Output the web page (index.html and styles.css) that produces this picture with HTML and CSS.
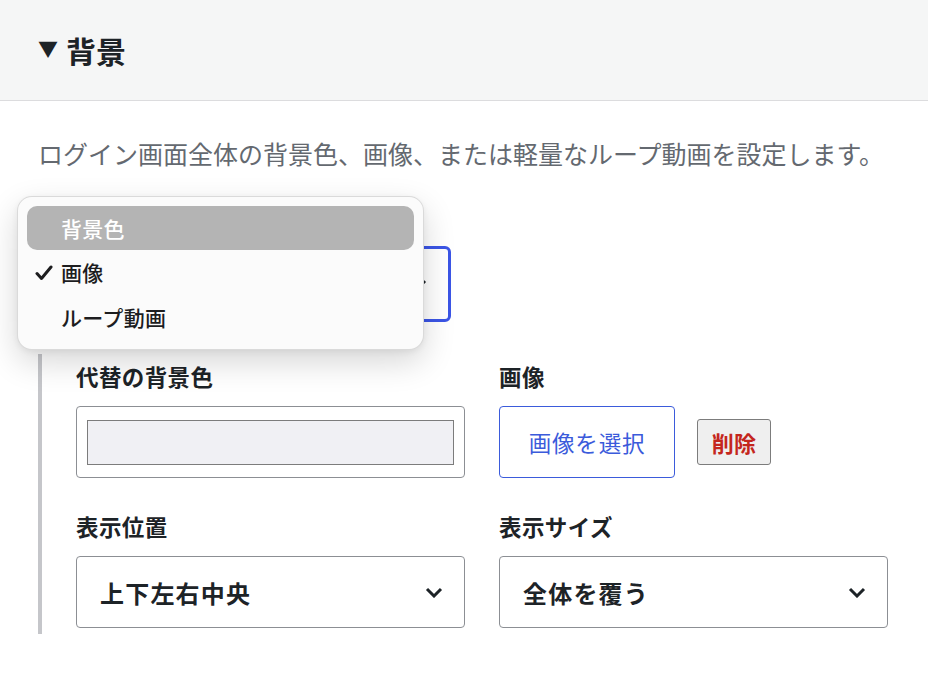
FILE: index.html
```html
<!DOCTYPE HTML>
<html lang="ja">
<head>
<meta charset="utf-8">
<title>背景</title>
<link rel="stylesheet" href="styles.css">
</head>
<body>
<div class="panel">
	<div class="panel-head">
		<h2><span class="arrow">▼</span>背景</h2>
	</div>
	<div class="panel-body">
		<p class="desc">ログイン画面全体の背景色、画像、または軽量なループ動画を設定します。</p>

		<div class="field type-field">
			<div class="select select-focus">
				<span></span>
				<svg class="chev" width="18" height="11" viewBox="0 0 18 11"><path d="M2 2l7 7 7-7" fill="none" stroke="#1d2327" stroke-width="3"/></svg>
			</div>
			<ul class="menu">
				<li class="hover">背景色</li>
				<li><svg class="check" width="18" height="16" viewBox="0 0 18 16"><path d="M2 8.5l4.5 5L16 2" fill="none" stroke="#1d1d1f" stroke-width="3" stroke-linecap="round" stroke-linejoin="round"/></svg>画像</li>
				<li>ループ動画</li>
			</ul>
		</div>

		<div class="sub">
			<div class="grid">
				<div class="field">
					<label class="label">代替の背景色</label>
					<div class="color-box"><span class="swatch"></span></div>
				</div>
				<div class="field">
					<label class="label">画像</label>
					<div class="btn-row">
						<button class="btn-pick">画像を選択</button>
						<button class="btn-del">削除</button>
					</div>
				</div>
				<div class="field">
					<label class="label">表示位置</label>
					<div class="select">
						<span>上下左右中央</span>
						<svg class="chev" width="18" height="11" viewBox="0 0 18 11"><path d="M2 2l7 7 7-7" fill="none" stroke="#1d2327" stroke-width="3"/></svg>
					</div>
				</div>
				<div class="field">
					<label class="label">表示サイズ</label>
					<div class="select">
						<span>全体を覆う</span>
						<svg class="chev" width="18" height="11" viewBox="0 0 18 11"><path d="M2 2l7 7 7-7" fill="none" stroke="#1d2327" stroke-width="3"/></svg>
					</div>
				</div>
			</div>
		</div>
	</div>
</div>
</body>
</html>
```
FILE: styles.css
```css
body{ margin:0; padding:0; background:#fff; font-family:"Noto Sans CJK JP","Noto Sans",sans-serif; color:#1d2327;}
ul{ margin:0; padding:0;}
li{ list-style:none;}

.panel-head{ height:100px; background:#f5f6f6; border-bottom:1px solid #dcdcde; padding-left:38px; display:flex; align-items:center;}
.panel-head h2{ margin:0; font-size:30px; font-weight:700; line-height:1; display:flex; align-items:center;}
.panel-head .arrow{ font-size:20px; margin-right:8px; position:relative; top:-1px;}

.panel-body{ padding:0 40px 0 38px;}
.desc{ margin:34px 0 0; font-size:25px; line-height:36px; color:#646970;}

.field{ display:flex; flex-direction:column; align-items:flex-start;}
.label{ display:block; padding-top:6px; line-height:32px; font-size:22.5px; font-weight:700; margin-bottom:14px; letter-spacing:.4px;}

.type-field{ position:relative; margin-top:75px; width:413px;}
.select{ box-sizing:border-box; width:100%; height:72px; border:1px solid #8c8f94; border-radius:4px; background:#fff; display:flex; align-items:center; justify-content:space-between; padding:0 21px 0 23px; font-size:24px; font-weight:700; letter-spacing:1.2px;}
.select-focus{ height:76px; border:3px solid #3b55e6; border-radius:6px;}

/* the open option list sits over the select */
.menu{ position:absolute; left:-21px; top:-50px; width:407px; box-sizing:border-box; padding:9px 9px; background:#fbfbfb; border:1px solid rgba(0,0,0,.13); border-radius:15px; box-shadow:0 12px 32px rgba(0,0,0,.16),0 2px 6px rgba(0,0,0,.06);}
.menu li{ position:relative; height:45px; line-height:45px; padding-left:34px; font-size:21px; font-weight:500; color:#1d1d1f; letter-spacing:.3px;}
.menu li.hover{ height:44px; line-height:44px; background:#b4b4b4; color:#fff; border-radius:10px;}
.menu .check{ position:absolute; left:8px; top:15px;}

.sub{ margin-top:32px; border-left:4px solid #c5c6ca; padding:0 0 6px 34px;}
.grid{ display:grid; grid-template-columns:389px 389px; column-gap:34px; row-gap:26px;}

.color-box{ box-sizing:border-box; width:389px; height:72px; border:1px solid #8c8f94; border-radius:4px; padding:13px 10px 12px;}
.swatch{ display:block; height:100%; box-sizing:border-box; background:#f0f0f4; border:1px solid #7c7c7c;}

.btn-row{ display:flex; align-items:center; height:72px;}
.btn-pick{ box-sizing:border-box; width:176px; height:72px; background:#fff; border:1px solid #3b5bdb; border-radius:4px; color:#3b5bdb; font-family:inherit; font-size:22.5px; letter-spacing:.8px;}
.btn-del{ box-sizing:border-box; margin-left:22px; width:74px; height:46px; background:#efefef; border:1px solid #7c7c7c; border-radius:3px; color:#c4261d; font-family:inherit; font-size:22px; font-weight:700; letter-spacing:.3px; padding:0;}
```
